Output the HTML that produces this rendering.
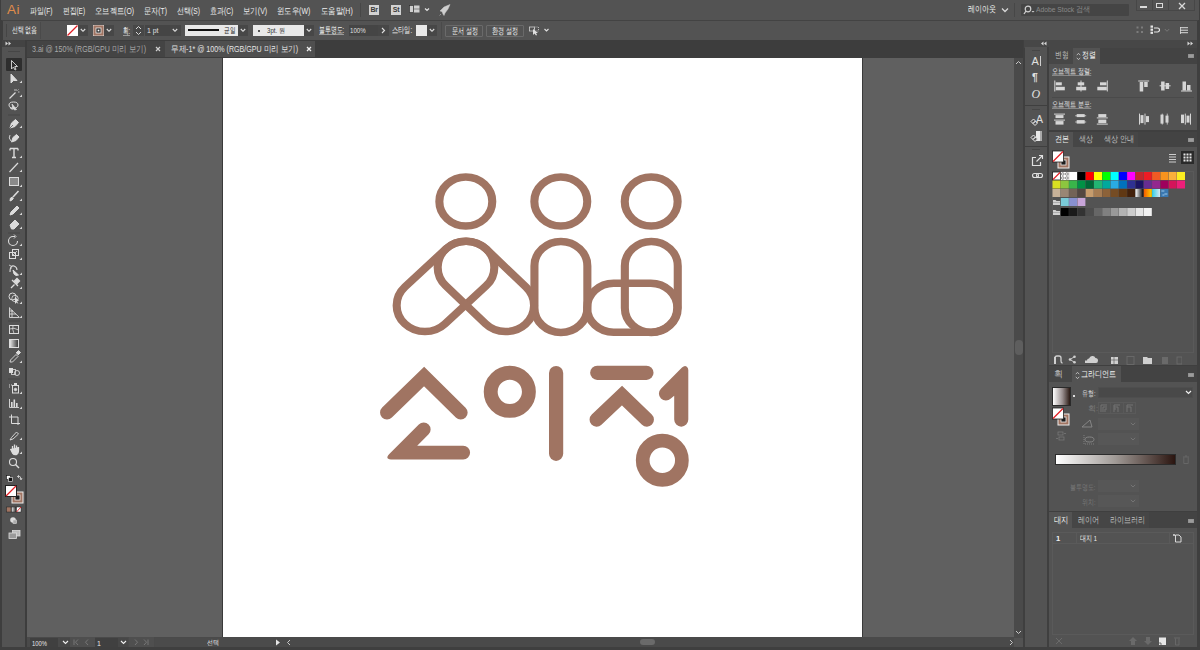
<!DOCTYPE html>
<html><head><meta charset="utf-8">
<style>
*{margin:0;padding:0;box-sizing:border-box}
html,body{width:1200px;height:650px;overflow:hidden;background:#3e3e3e;font-family:"Liberation Sans",sans-serif;color:#d6d6d6;font-size:8px}
.a{position:absolute}
.t{position:absolute;white-space:nowrap;line-height:1}
.m{top:6.5px;font-size:8.5px;color:#eeeeee}
.s{font-size:7px;color:#e0e0e0}
.tb{font-size:8.5px}
.ph{font-size:8.5px}
.ps{font-size:7.5px;color:#e4e4e4}
.dd{background:#474747}
.ib{background:#d2d2d2;color:#3a3a3a;font-size:7px;font-weight:bold;text-align:center;line-height:10px;letter-spacing:-0.3px}
.btn{border:1px solid #6a6a6a;border-radius:1px;background:#535353}
</style></head><body>
<!-- ===== MENU BAR ===== -->
<div class="a" style="left:0;top:0;width:1200px;height:650px;background:#3e3e3e"></div>
<div class="a" style="left:1px;top:0;width:1198px;height:20px;background:#535353"></div>
<div class="t" style="left:7px;top:3px;font-size:13.5px;color:#e08c4a;letter-spacing:0.6px">Ai</div>
<div class="t m" style="left:30px;--w:22.5;transform:scaleX(0.780);transform-origin:0 0">파일(F)</div>
<div class="t m" style="left:63px;--w:22;transform:scaleX(0.750);transform-origin:0 0">편집(E)</div>
<div class="t m" style="left:95px;--w:39;transform:scaleX(0.808);transform-origin:0 0">오브젝트(O)</div>
<div class="t m" style="left:144px;--w:23;transform:scaleX(0.797);transform-origin:0 0">문자(T)</div>
<div class="t m" style="left:177px;--w:23;transform:scaleX(0.784);transform-origin:0 0">선택(S)</div>
<div class="t m" style="left:210px;--w:23.3;transform:scaleX(0.782);transform-origin:0 0">효과(C)</div>
<div class="t m" style="left:243.3px;--w:24.2;transform:scaleX(0.825);transform-origin:0 0">보기(V)</div>
<div class="t m" style="left:276.7px;--w:33.3;transform:scaleX(0.818);transform-origin:0 0">윈도우(W)</div>
<div class="t m" style="left:320.8px;--w:31.7;transform:scaleX(0.817);transform-origin:0 0">도움말(H)</div>
<div class="a" style="left:360px;top:3px;width:1px;height:14px;background:#474747"></div>
<div class="a ib" style="left:369px;top:5px;width:10px;height:10px">Br</div>
<div class="a ib" style="left:391px;top:5px;width:10px;height:10px">St</div>
<svg class="a" style="left:409px;top:5px" width="22" height="10"><rect x="0.5" y="0.5" width="4" height="7" fill="#d0d0d0" stroke="#2a2a2a" stroke-width="0.6"/><rect x="5" y="0.5" width="5.5" height="3.2" fill="#d0d0d0"/><rect x="5" y="4.3" width="5.5" height="3.2" fill="#d0d0d0"/><path d="M16 3.5 L18 5.5 L20 3.5" stroke="#e0e0e0" stroke-width="1.2" fill="none"/></svg>
<svg class="a" style="left:439px;top:4px" width="12" height="12"><path d="M11 0.5 L5 3 L1 7 L3 7.5 L4 10 L5 11.5 L6 9 L9 5 Z M2 10 L0.5 11.5" fill="#cfcfcf" stroke="#cfcfcf" stroke-width="0.5"/></svg>
<div class="t m" style="left:967.8px;top:5px;--w:28;transform:scaleX(0.778);transform-origin:0 0">레이아웃</div>
<svg class="a" style="left:1001px;top:7px" width="8" height="6"><path d="M1 1.5 L4 4.5 L7 1.5" stroke="#d8d8d8" stroke-width="1.3" fill="none"/></svg>
<div class="a" style="left:1014px;top:3px;width:1px;height:14px;background:#474747"></div>
<div class="a" style="left:1021px;top:4px;width:108px;height:12px;background:#454545;border-radius:1px"></div>
<svg class="a" style="left:1023px;top:5px" width="12" height="10"><circle cx="5" cy="4" r="2.8" stroke="#d0d0d0" stroke-width="1.2" fill="none"/><path d="M3 6 L1 9" stroke="#d0d0d0" stroke-width="1.3"/><path d="M8.5 6 L10 7.5 L11.5 6Z" fill="#d0d0d0"/></svg>
<div class="t" style="left:1035.5px;top:6px;font-size:7.5px;color:#8a8a8a;--w:54.4;transform:scaleX(0.897);transform-origin:0 0">Adobe Stock 검색</div>
<div class="a" style="left:1136px;top:-1px;width:59px;height:12px;border:1px solid #474747"></div>
<div class="a" style="left:1152px;top:0px;width:1px;height:11px;background:#474747"></div>
<div class="a" style="left:1168px;top:0px;width:1px;height:11px;background:#474747"></div>
<div class="a" style="left:1140px;top:6px;width:7px;height:1.5px;background:#dadada"></div>
<div class="a" style="left:1156px;top:3px;width:7px;height:5px;border:1.3px solid #dadada"></div>
<svg class="a" style="left:1178px;top:2px" width="8" height="8"><path d="M1 1 L7 7 M7 1 L1 7" stroke="#dadada" stroke-width="1.3"/></svg>

<!-- ===== CONTROL BAR ===== -->
<div class="a" style="left:2px;top:20px;width:1196px;height:1px;background:#434343"></div>
<div class="a" style="left:3px;top:21px;width:1194px;height:19px;background:#535353"></div>
<div class="a" style="left:6px;top:24px;width:1px;height:13px;background:#454545"></div>
<div class="t m" style="left:11.5px;top:26px;--w:25.3;transform:scaleX(0.659);transform-origin:0 0">선택 없음</div>
<div class="a" style="left:40px;top:22px;width:1px;height:17px;background:#4a4a4a"></div>
<!-- fill swatch -->
<svg class="a" style="left:67px;top:25px" width="11" height="11"><rect x="0" y="0" width="11" height="11" fill="#fff"/><path d="M0.5 10.5 L10.5 0.5" stroke="#e31e24" stroke-width="1.2"/></svg>
<div class="a dd" style="left:78px;top:25px;width:10px;height:11px"></div>
<svg class="a" style="left:80px;top:28px" width="6" height="5"><path d="M0.8 1 L3 3.3 L5.2 1" stroke="#e0e0e0" stroke-width="1.1" fill="none"/></svg>
<svg class="a" style="left:93px;top:25px" width="11" height="11"><rect x="0" y="0" width="11" height="11" fill="#a07462" stroke="#e8e8e8" stroke-width="0.8"/><rect x="3" y="3" width="5" height="5" fill="#222" stroke="#eee" stroke-width="0.8"/><rect x="4.6" y="4.6" width="1.8" height="1.8" fill="#fff"/></svg>
<div class="a dd" style="left:104px;top:25px;width:10px;height:11px"></div>
<svg class="a" style="left:106px;top:28px" width="6" height="5"><path d="M0.8 1 L3 3.3 L5.2 1" stroke="#e0e0e0" stroke-width="1.1" fill="none"/></svg>
<div class="t m" style="left:123px;top:26.5px;text-decoration:underline;text-decoration-color:#999;--w:7;transform:scaleX(0.615);transform-origin:0 0">획:</div>
<div class="a dd" style="left:133px;top:25px;width:11px;height:11px"></div>
<svg class="a" style="left:135px;top:25px" width="7" height="11"><path d="M1 4 L3.5 1.5 L6 4 M1 7 L3.5 9.5 L6 7" stroke="#d8d8d8" stroke-width="1" fill="none"/></svg>
<div class="a" style="left:145px;top:25px;width:25px;height:11px;background:#454545"></div>
<div class="t s" style="left:146.7px;top:27px;--w:11.5;transform:scaleX(0.984);transform-origin:0 0">1 pt</div>
<div class="a dd" style="left:170px;top:25px;width:11px;height:11px"></div>
<svg class="a" style="left:172px;top:28px" width="6" height="5"><path d="M0.8 1 L3 3.3 L5.2 1" stroke="#e0e0e0" stroke-width="1.1" fill="none"/></svg>
<!-- stroke style -->
<div class="a" style="left:185px;top:25px;width:53px;height:11px;background:#e8e8e8"></div>
<div class="a" style="left:188px;top:29.3px;width:31px;height:2.2px;background:#111"></div>
<div class="t" style="left:223.5px;top:26.5px;font-size:7.5px;color:#222;--w:11.2;transform:scaleX(0.700);transform-origin:0 0">균일</div>
<div class="a dd" style="left:238px;top:25px;width:10px;height:11px"></div>
<svg class="a" style="left:240px;top:28px" width="6" height="5"><path d="M0.8 1 L3 3.3 L5.2 1" stroke="#e0e0e0" stroke-width="1.1" fill="none"/></svg>
<div class="a" style="left:253px;top:25px;width:51px;height:11px;background:#e8e8e8"></div>
<div class="a" style="left:258px;top:30px;width:1.6px;height:1.6px;background:#222;border-radius:1px"></div>
<div class="t" style="left:267px;top:27px;font-size:7px;color:#333;--w:18;transform:scaleX(0.873);transform-origin:0 0">3pt. 원</div>
<div class="a dd" style="left:304px;top:25px;width:10px;height:11px"></div>
<svg class="a" style="left:306px;top:28px" width="6" height="5"><path d="M0.8 1 L3 3.3 L5.2 1" stroke="#e0e0e0" stroke-width="1.1" fill="none"/></svg>
<div class="t m" style="left:318.7px;top:26px;text-decoration:underline;text-decoration-color:#999;--w:25;transform:scaleX(0.651);transform-origin:0 0">불투명도:</div>
<div class="a" style="left:349px;top:25px;width:29px;height:11px;background:#454545"></div>
<div class="t s" style="left:350px;top:27px;--w:15.7;transform:scaleX(0.877);transform-origin:0 0">100%</div>
<div class="a dd" style="left:378px;top:25px;width:11px;height:11px"></div>
<svg class="a" style="left:381px;top:27px" width="5" height="7"><path d="M1 1 L3.5 3.5 L1 6" stroke="#e0e0e0" stroke-width="1.1" fill="none"/></svg>
<div class="t m" style="left:392.3px;top:26px;--w:20.2;transform:scaleX(0.688);transform-origin:0 0">스타일:</div>
<div class="a" style="left:416px;top:25px;width:11px;height:11px;background:#e9e9e9"></div>
<div class="a dd" style="left:427px;top:25px;width:10px;height:11px"></div>
<svg class="a" style="left:429px;top:28px" width="6" height="5"><path d="M0.8 1 L3 3.3 L5.2 1" stroke="#e0e0e0" stroke-width="1.1" fill="none"/></svg>
<div class="a" style="left:441px;top:22px;width:1px;height:17px;background:#4a4a4a"></div>
<div class="a btn" style="left:445px;top:25px;width:38px;height:12px"></div>
<div class="t m" style="left:451.5px;top:27px;--w:26;transform:scaleX(0.678);transform-origin:0 0">문서 설정</div>
<div class="a btn" style="left:486px;top:25px;width:38px;height:12px"></div>
<div class="t m" style="left:492px;top:27px;--w:26;transform:scaleX(0.678);transform-origin:0 0">환경 설정</div>
<svg class="a" style="left:529px;top:25px" width="22" height="11"><rect x="0.5" y="2" width="5" height="4" fill="none" stroke="#d0d0d0" stroke-width="0.8"/><rect x="5.5" y="2" width="4" height="4" fill="none" stroke="#d0d0d0" stroke-width="0.8" stroke-dasharray="1 1"/><path d="M4 4 L4 10 L5.5 8.5 L7 10.5 L8 10 L7 8 L9 8 Z" fill="#e0e0e0"/><path d="M15.5 4 L17.5 6 L19.5 4" stroke="#e0e0e0" stroke-width="1.1" fill="none"/></svg>
<!-- right of control bar -->
<svg class="a" style="left:1136px;top:26px" width="8" height="8"><rect x="0.5" y="0.5" width="2" height="2" fill="#7c7c7c"/><rect x="5" y="0.5" width="2" height="2" fill="#7c7c7c"/><rect x="0.5" y="5" width="2" height="2" fill="#7c7c7c"/><rect x="5" y="5" width="2" height="2" fill="#7c7c7c"/></svg>
<svg class="a" style="left:1150px;top:25px" width="12" height="10"><rect x="0.5" y="0.5" width="2.5" height="2.2" fill="#e6e6e6"/><rect x="0.5" y="3.6" width="2.5" height="2.2" fill="#e6e6e6"/><rect x="0.5" y="6.7" width="2.5" height="2.2" fill="#e6e6e6"/><path d="M4 3 L7.5 3 A2 2 0 0 1 7.5 7 L4 7" fill="none" stroke="#e6e6e6" stroke-width="1.2"/></svg>
<svg class="a" style="left:1164px;top:28px" width="6" height="5"><path d="M0.8 1 L3 3.3 L5.2 1" stroke="#777" stroke-width="1" fill="none"/></svg>
<svg class="a" style="left:1180px;top:27px" width="8" height="7"><path d="M0 0.7 H8 M0 3.2 H8 M0 5.7 H8" stroke="#dcdcdc" stroke-width="1"/><path d="M0.5 0 V7" stroke="#dcdcdc" stroke-width="0.8"/></svg>

<!-- ===== TAB BAR ===== -->
<div class="a" style="left:2px;top:40px;width:1021px;height:1px;background:#3e3e3e"></div>
<div class="a" style="left:27px;top:40px;width:996px;height:18px;background:#3d3d3d"></div>
<div class="a" style="left:27px;top:41px;width:138px;height:16px;background:#444444"></div>
<div class="a" style="left:165px;top:41px;width:150px;height:16px;background:#4f4f4f"></div>
<div class="t tb" style="left:32.4px;top:45px;color:#a9a9a9;--w:114.2;transform:scaleX(0.835);transform-origin:0 0">3.ai @ 150% (RGB/GPU 미리 보기)</div>
<svg class="a" style="left:155px;top:46px" width="6" height="6"><path d="M1 1 L5 5 M5 1 L1 5" stroke="#cfcfcf" stroke-width="1.2"/></svg>
<div class="t tb" style="left:170.6px;top:45px;color:#e4e4e4;--w:127.2;transform:scaleX(0.837);transform-origin:0 0">무제-1* @ 100% (RGB/GPU 미리 보기)</div>
<svg class="a" style="left:306px;top:46px" width="6" height="6"><path d="M1 1 L5 5 M5 1 L1 5" stroke="#f0f0f0" stroke-width="1.3"/></svg>

<!-- ===== TOOLBAR ===== -->
<div class="a" style="left:2px;top:40px;width:23px;height:607px;background:#535353"></div>
<div class="a" style="left:2px;top:40px;width:23px;height:7px;background:#434343"></div>
<svg class="a" style="left:5px;top:41px" width="8" height="5"><path d="M0.5 0.5 L3 2.5 L0.5 4.5Z M3.5 0.5 L6 2.5 L3.5 4.5Z" fill="#d8d8d8"/></svg>
<div class="a" style="left:25px;top:40px;width:2px;height:607px;background:#3d3d3d"></div>
<div class="a" style="left:8px;top:50.5px;width:12px;height:1px;background:#464646"></div>
<div class="a" style="left:6px;top:58px;width:16px;height:13px;background:#2e2e2e;border-radius:1px"></div>
<svg class="a" style="left:0;top:0" width="27" height="650" fill="none" stroke="#dcdcdc" stroke-width="1">
<!-- selection -->
<path d="M11.5 60.5 L11.5 69 L13.5 67 L15 70 L16 69.5 L14.8 66.5 L17.5 66.5 Z" stroke-width="0.9"/>
<!-- direct selection -->
<path d="M11 74 L11 83 L13.5 80.5 L17 80.5 Z" fill="#dcdcdc"/>
<path d="M19.5 83.0 L22 83.0 L22 80.5 Z" fill="#d8d8d8" stroke="none"/>
<!-- magic wand -->
<path d="M9.5 98.5 L15.5 92.5" stroke-width="1.3"/><path d="M16 89 V91 M14 90 H15 M17.5 90.5 L18.5 89.5 M18 92 H19.5" stroke-width="0.8"/>
<path d="M19.5 97.0 L22 97.0 L22 94.5 Z" fill="#d8d8d8" stroke="none"/>
<!-- lasso -->
<ellipse cx="13.5" cy="105" rx="4.5" ry="3" /><path d="M10 107 Q11 110 13 109 L12 104 L16.5 109.5 L14.5 110" fill="#dcdcdc" stroke-width="0.8"/>
<path d="M8 115 H20" stroke="#474747"/>
<!-- pen -->
<path d="M10 128 L11.5 123 L15.5 119.5 L18.5 122.5 L15 126.5 Z" fill="#dcdcdc"/><path d="M10 128 L13 125" stroke="#535353" stroke-width="0.8"/>
<path d="M19.5 128.0 L22 128.0 L22 125.5 Z" fill="#d8d8d8" stroke="none"/>
<!-- curvature -->
<path d="M11.5 142 L13 137.5 L16.5 134.5 L19 137 L16 140.5 Z" fill="#dcdcdc"/><path d="M11 141 Q8 138 10 135" stroke-width="0.9"/>
<!-- type -->
<path d="M10 148.5 H18 M14 148.5 V157.5 M12 157.5 H16 M10 148.5 V150.5 M18 148.5 V150.5" stroke-width="1.4"/>
<path d="M19.5 158.0 L22 158.0 L22 155.5 Z" fill="#d8d8d8" stroke="none"/>
<!-- line -->
<path d="M9.5 172 L18 163" stroke-width="1.2"/>
<path d="M19.5 172.0 L22 172.0 L22 169.5 Z" fill="#d8d8d8" stroke="none"/>
<!-- rect -->
<rect x="9.5" y="177.5" width="9" height="8" fill="#8a8a8a" stroke="#dcdcdc"/>
<path d="M19.5 187.0 L22 187.0 L22 184.5 Z" fill="#d8d8d8" stroke="none"/>
<!-- paintbrush -->
<path d="M18.5 191 L13 197" stroke-width="1.6"/><path d="M12.5 197 Q9.5 197.5 10 201 Q12.5 200.5 13.5 198" fill="#dcdcdc"/>
<path d="M19.5 201.0 L22 201.0 L22 198.5 Z" fill="#d8d8d8" stroke="none"/>
<!-- pencil -->
<path d="M10 215 L11 212 L17 206 L19 208 L13 214 Z" fill="#dcdcdc"/>
<path d="M19.5 215.0 L22 215.0 L22 212.5 Z" fill="#d8d8d8" stroke="none"/>
<!-- eraser -->
<path d="M10 225 L15 220 L19 224 L14 229 L11.5 229 Z" fill="#dcdcdc"/>
<path d="M19.5 229.0 L22 229.0 L22 226.5 Z" fill="#d8d8d8" stroke="none"/>
<path d="M8 233 H20" stroke="#474747"/>
<!-- rotate -->
<path d="M17.5 241 A4.5 4.5 0 1 1 13 236.5 L15 236.5" stroke-width="1.1"/><path d="M14 234.5 L16 236.5 L14 238.5" stroke-width="0.9"/>
<path d="M19.5 246.0 L22 246.0 L22 243.5 Z" fill="#d8d8d8" stroke="none"/>
<!-- scale -->
<rect x="9.5" y="252.5" width="6" height="6"/><rect x="12.5" y="249.5" width="6" height="6"/><path d="M13 255 L17 251" stroke-width="0.8"/>
<path d="M19.5 260.0 L22 260.0 L22 257.5 Z" fill="#d8d8d8" stroke="none"/>
<!-- warp -->
<path d="M10 272 Q10 265 14 266 Q17 267 17 270" stroke-width="1.1"/><path d="M13 270 L18.5 275 L16 275.5 L14 274 Z" fill="#dcdcdc"/><path d="M9 265 L11 266 M10 268 L12 268" stroke-width="0.8"/>
<path d="M19.5 275.0 L22 275.0 L22 272.5 Z" fill="#d8d8d8" stroke="none"/>
<!-- width / puppet -->
<path d="M11 288 L14.5 284.5 M12 280 L18 286 M14 281.5 L17 278.5 L19.5 281 L16.5 284" fill="#dcdcdc" stroke-width="1.3"/>
<path d="M19.5 289.0 L22 289.0 L22 286.5 Z" fill="#d8d8d8" stroke="none"/>
<!-- shape builder -->
<circle cx="12.5" cy="296.5" r="3.5"/><circle cx="15" cy="298.5" r="3.2" stroke-width="0.8"/><path d="M15 297 L15 304 L16.5 302.5 L18.5 304 L17 301 L19 300.5 Z" fill="#dcdcdc" stroke="none"/>
<path d="M19.5 304.0 L22 304.0 L22 301.5 Z" fill="#d8d8d8" stroke="none"/>
<!-- perspective -->
<path d="M9.5 307.5 V317.5 H19.5 M9.5 308 L19 317 M9.5 311 H13 M9.5 314 H16 M12 310 V317" stroke-width="0.9"/>
<path d="M19.5 318.0 L22 318.0 L22 315.5 Z" fill="#d8d8d8" stroke="none"/>
<path d="M8 321 H20" stroke="#474747"/>
<!-- mesh -->
<rect x="9.5" y="325.5" width="9" height="8"/><path d="M9.5 329 Q14 327 18.5 330 M13 325.5 Q12 329.5 14 333.5" stroke-width="0.8"/>
<!-- gradient -->
<rect x="9.5" y="339.5" width="9" height="8" fill="url(#tg)" stroke="#dcdcdc"/>
<!-- eyedropper -->
<path d="M10 362 L10.5 360 L16 354.5 L18 356.5 L12.5 362 Z" stroke-width="0.9"/><path d="M16 353 L18.5 350.5 L20.5 352.5 L18 355" fill="#dcdcdc"/>
<path d="M19.5 363.0 L22 363.0 L22 360.5 Z" fill="#d8d8d8" stroke="none"/>
<!-- blend -->
<rect x="9" y="368" width="4" height="5" fill="#dcdcdc" stroke="none"/><rect x="11.5" y="369.5" width="4" height="5" fill="none" stroke-width="0.8"/><circle cx="17" cy="373" r="2.5" stroke-width="0.9"/>
<path d="M8 379 H20" stroke="#474747"/>
<!-- symbol sprayer -->
<path d="M9 385 h1 M11 385 h1 M9 387 h1" stroke-width="1"/><rect x="12.5" y="385.5" width="6" height="7.5"/><circle cx="15.5" cy="389.5" r="1.2" fill="#dcdcdc"/><rect x="14" y="383" width="3" height="2.5" fill="#dcdcdc" stroke="none"/>
<path d="M19.5 394.0 L22 394.0 L22 391.5 Z" fill="#d8d8d8" stroke="none"/>
<!-- graph -->
<path d="M9.5 399 V407.5 H19" stroke-width="0.9"/><rect x="11" y="402" width="1.6" height="5" fill="#dcdcdc" stroke="none"/><rect x="13.5" y="399.5" width="1.6" height="7.5" fill="#dcdcdc" stroke="none"/><rect x="16" y="403" width="1.6" height="4" fill="#dcdcdc" stroke="none"/>
<path d="M19.5 409.0 L22 409.0 L22 406.5 Z" fill="#d8d8d8" stroke="none"/>
<!-- artboard -->
<path d="M11.5 414.5 V423.5 H20 M9 417 H18 V425" stroke-width="1"/>
<!-- slice/knife -->
<path d="M10 440 L11.5 437.5 L16.5 432 L18.5 434 L13 439 Z" stroke-width="0.9"/>
<path d="M19.5 440.0 L22 440.0 L22 437.5 Z" fill="#d8d8d8" stroke="none"/>
<!-- hand -->
<path d="M10.5 449 L12.5 453 Q14 455 16.5 454.5 Q18.5 453.5 18.5 450 V447 M16.5 449 V445.5 M14.5 449 V444.5 M12.5 449 V446" fill="#dcdcdc" stroke-width="1.3"/>
<path d="M19.5 454.0 L22 454.0 L22 451.5 Z" fill="#d8d8d8" stroke="none"/>
<!-- zoom -->
<circle cx="13" cy="462" r="3.5" stroke-width="1.1"/><path d="M15.5 464.5 L19 468" stroke-width="1.4"/>
</svg>
<svg class="a" style="left:0;top:0" width="27" height="650">
<defs><linearGradient id="tg"><stop offset="0" stop-color="#eee"/><stop offset="1" stop-color="#333"/></linearGradient></defs>
<!-- default colors/swap -->
<rect x="6.5" y="475.5" width="4" height="4" fill="#fff" stroke="#111" stroke-width="0.6"/><rect x="8.5" y="477.5" width="4" height="4" fill="#111" stroke="#eee" stroke-width="0.6"/>
<path d="M18 476 Q21 476 21 479 M17 477 L18.5 475.5 L18.5 478 M20 478 L21 480 L22 478" stroke="#dcdcdc" stroke-width="0.8" fill="none"/>
<!-- stroke box -->
<rect x="12" y="492" width="11" height="11" fill="#a07462" stroke="#ededed" stroke-width="1"/><rect x="15" y="495" width="5" height="5" fill="#1d1d1d" stroke="#eee" stroke-width="0.8"/>
<!-- fill box -->
<rect x="5.5" y="485.5" width="11" height="11" fill="#fff" stroke="#222" stroke-width="1"/><path d="M6 496 L16 486" stroke="#e31e24" stroke-width="1.3"/>
<!-- color/gradient/none -->
<rect x="6.5" y="507" width="4.5" height="5" fill="#a07462" stroke="#222" stroke-width="0.5"/><rect x="11.5" y="507" width="4.5" height="5" fill="url(#tg)" stroke="#222" stroke-width="0.5"/><rect x="16.5" y="507" width="4.5" height="5" fill="#fff" stroke="#222" stroke-width="0.5"/><path d="M16.5 512 L21 507" stroke="#e31e24" stroke-width="0.9"/>
<!-- draw mode -->
<circle cx="13" cy="520" r="2.8" fill="#dcdcdc"/><rect x="13" y="520" width="3.5" height="3.5" fill="#aaa" stroke="#dcdcdc" stroke-width="0.6"/>
<!-- screen mode -->
<rect x="12.5" y="530.5" width="7.5" height="5.5" fill="#bbb" stroke="#dcdcdc" stroke-width="0.8"/><rect x="9" y="533" width="7.5" height="5.5" fill="#999" stroke="#dcdcdc" stroke-width="0.8"/>
</svg>
<div class="a" style="left:2px;top:647px;width:23px;height:0"></div>

<!-- ===== CANVAS ===== -->
<div class="a" style="left:27px;top:58px;width:987px;height:579px;background:#606060"></div>
<div class="a" style="left:222px;top:58px;width:641px;height:581px;background:#3a3a3a"></div>
<div class="a" style="left:223px;top:58px;width:639px;height:579px;background:#ffffff"></div>

<svg class="a" style="left:0;top:0" width="1200" height="650" viewBox="0 0 1200 650">
<g transform="translate(560 0) scale(1.08 1) translate(-560 0)" fill="none" stroke="#a07462" stroke-width="7.5">
<ellipse cx="472.78" cy="201.5" rx="24.5" ry="24.5"/>
<ellipse cx="560.74" cy="201.5" rx="24.5" ry="24.5"/>
<ellipse cx="644.44" cy="201.5" rx="24.5" ry="24.5"/>
<path d="M536.33 265.90 L536.33 307.90 A24.5 24.5 0 0 0 585.33 307.90 L585.33 265.90 A24.5 24.5 0 0 0 536.33 265.90 Z"/>
<path d="M620.04 265.90 L620.04 307.90 A24.5 24.5 0 0 0 669.04 307.90 L669.04 265.90 A24.5 24.5 0 0 0 620.04 265.90 Z"/>
<path d="M609.63 332.20 L644.07 332.20 A24.5 24.5 0 0 0 644.07 283.20 L609.63 283.20 A24.5 24.5 0 0 0 609.63 332.20 Z"/>
<path d="M454.44 248.87 L416.44 286.87 A26.2 26.2 0 0 0 453.49 323.93 L491.49 285.93 A26.2 26.2 0 0 0 454.44 248.87 Z"/>
<path d="M454.14 285.63 L490.94 323.63 A26.2 26.2 0 0 0 528.58 287.17 L491.78 249.17 A26.2 26.2 0 0 0 454.14 285.63 Z"/>
</g>
<g fill="none" stroke="#a07462" stroke-width="13.9" stroke-linecap="round" stroke-linejoin="miter">
<polyline points="387,412.6 424.1,376.5 460.7,412.6"/>
<circle cx="509.8" cy="391.8" r="19.1"/>
<line x1="556.1" y1="373.1" x2="556.1" y2="453.8" stroke-width="14.2"/>
<line x1="597.2" y1="372.85" x2="646.5" y2="372.85" stroke-width="14.1"/>
<polyline points="596.6,419.6 622,395.6 646.9,419.6" stroke-width="14.1"/>
<circle cx="662.3" cy="460.3" r="19.6" stroke-width="13.7"/>
</g>
<g fill="#a07462">
<path d="M417.2 445.7 L463.2 445.7 A6.9 6.9 0 0 1 463.2 459.5 L393 459.5 Q384 459.5 389.3 454 L418.8 424.5 A6.9 6.9 0 0 1 428.6 434.3 Z"/>
<path d="M674.2 395.8 L670.85 398.55 A7 7 0 0 1 660.95 388.65 L682 367.6 Q684.5 365.3 686.5 366.5 Q688.3 367.8 688.3 370 L688.3 419.6 A7.05 7.05 0 0 1 674.2 419.6 Z"/>
</g>
</svg>
<!-- ===== SCROLLBARS / STATUS ===== -->
<div class="a" style="left:1014px;top:58px;width:9px;height:580px;background:#4a4a4a"></div>
<svg class="a" style="left:1015px;top:60px" width="7" height="5"><path d="M1 4 L3.5 1.5 L6 4" stroke="#c8c8c8" stroke-width="1" fill="none"/></svg>
<div class="a" style="left:1015px;top:340px;width:8px;height:15px;background:#5e5e5e;border-radius:4px"></div>
<svg class="a" style="left:1015px;top:630px" width="7" height="5"><path d="M1 1 L3.5 3.5 L6 1" stroke="#c8c8c8" stroke-width="1" fill="none"/></svg>
<div class="a" style="left:27px;top:637px;width:996px;height:10px;background:#4a4a4a"></div>
<div class="a" style="left:1014px;top:638px;width:9px;height:9px;background:#535353"></div>
<div class="a" style="left:640px;top:639px;width:15px;height:6px;background:#6a6a6a;border-radius:3px"></div>
<svg class="a" style="left:1009px;top:639px" width="5" height="7"><path d="M1 1 L3.5 3.5 L1 6" stroke="#c8c8c8" stroke-width="1" fill="none"/></svg>
<div class="a" style="left:30px;top:638px;width:28px;height:9px;background:#404040"></div>
<div class="t s" style="left:32px;top:639.5px;font-size:7px;color:#e6e6e6;--w:15;transform:scaleX(0.838);transform-origin:0 0">100%</div>
<div class="a" style="left:60px;top:638px;width:10px;height:9px;background:#474747"></div>
<svg class="a" style="left:61.5px;top:640px" width="7" height="5"><path d="M1 1 L3.5 3.5 L6 1" stroke="#f0f0f0" stroke-width="1.1" fill="none"/></svg>
<div class="a" style="left:70px;top:637px;width:25px;height:10px;background:#4f4f4f"></div>
<svg class="a" style="left:73px;top:639px" width="20" height="7"><path d="M1 0.5 V6 M5 0.5 L2.5 3.2 L5 6 M15 0.5 L12.5 3.2 L15 6" stroke="#7a7a7a" stroke-width="0.9" fill="none"/></svg>
<div class="a" style="left:95px;top:638px;width:23px;height:9px;background:#404040"></div>
<div class="t s" style="left:97px;top:639.5px;font-size:7px;color:#e6e6e6">1</div>
<div class="a" style="left:118px;top:638px;width:10px;height:9px;background:#474747"></div>
<svg class="a" style="left:119.5px;top:640px" width="7" height="5"><path d="M1 1 L3.5 3.5 L6 1" stroke="#f0f0f0" stroke-width="1.1" fill="none"/></svg>
<div class="a" style="left:129px;top:637px;width:25px;height:10px;background:#4f4f4f"></div>
<svg class="a" style="left:133px;top:639px" width="20" height="7"><path d="M2 0.5 L4.5 3.2 L2 6 M11 0.5 L13.5 3.2 L11 6 M15 0.5 V6" stroke="#7a7a7a" stroke-width="0.9" fill="none"/></svg>
<div class="a" style="left:155px;top:638px;width:118px;height:9px;background:#4b4b4b"></div>
<div class="t s" style="left:207.3px;top:639px;font-size:7px;color:#e6e6e6;--w:12;transform:scaleX(0.857);transform-origin:0 0">선택</div>
<svg class="a" style="left:275px;top:639px" width="6" height="7"><path d="M1 0.5 L5 3.5 L1 6.5Z" fill="#e6e6e6"/></svg>
<svg class="a" style="left:286px;top:639px" width="5" height="7"><path d="M4 1 L1.5 3.5 L4 6" stroke="#c8c8c8" stroke-width="1" fill="none"/></svg>

<!-- ===== RIGHT DOCK ===== -->
<div class="a" style="left:1023px;top:40px;width:177px;height:610px;background:#3f3f3f"></div>
<div class="a" style="left:1024px;top:40px;width:174px;height:7.5px;background:#474747"></div>
<svg class="a" style="left:1039px;top:41px" width="8" height="5"><path d="M7.5 0.5 L5 2.5 L7.5 4.5Z M4.5 0.5 L2 2.5 L4.5 4.5Z" fill="#d8d8d8"/></svg>
<svg class="a" style="left:1187px;top:41px" width="8" height="5"><path d="M0.5 0.5 L3 2.5 L0.5 4.5Z M3.5 0.5 L6 2.5 L3.5 4.5Z" fill="#d8d8d8"/></svg>
<!-- icon strip -->
<div class="a" style="left:1025px;top:47px;width:22px;height:58px;background:#535353"></div>
<div class="a" style="left:1025px;top:106px;width:22px;height:39.5px;background:#535353"></div>
<div class="a" style="left:1025px;top:146.5px;width:22px;height:500.5px;background:#535353"></div>
<div class="a" style="left:1032px;top:49.5px;width:8px;height:1px;background:#464646"></div>
<div class="a" style="left:1032px;top:108.5px;width:8px;height:1px;background:#464646"></div>
<div class="a" style="left:1032px;top:148.5px;width:8px;height:1px;background:#464646"></div>
<div class="t" style="left:1031.5px;top:56px;font-size:11px;color:#e0e0e0">A</div>
<div class="a" style="left:1040px;top:56px;width:1px;height:10px;background:#cfcfcf"></div>
<div class="t" style="left:1032px;top:72px;font-size:10.5px;color:#e0e0e0;font-weight:bold">¶</div>
<div class="t" style="left:1031.5px;top:88px;font-size:12px;color:#e0e0e0;font-family:'Liberation Serif',serif;font-style:italic">O</div>
<div class="t" style="left:1036px;top:113.5px;font-size:10.5px;color:#e0e0e0">A</div>
<svg class="a" style="left:1030px;top:118px" width="8" height="8"><path d="M1 3.5 L3.5 1 L5.5 3 L3 5.5 Z M3 5.5 L5.5 3 L7.5 5 L5 7.5 Z" fill="none" stroke="#e6e6e6" stroke-width="1"/></svg>
<div class="a" style="left:1036px;top:131px;width:6px;height:10px;background:linear-gradient(90deg,#e6e6e6 60%,#aaa 60%)"></div>
<svg class="a" style="left:1030px;top:134px" width="8" height="8"><path d="M1 3.5 L3.5 1 L5.5 3 L3 5.5 Z M3 5.5 L5.5 3 L7.5 5 L5 7.5 Z" fill="#535353" stroke="#e6e6e6" stroke-width="1"/></svg>
<svg class="a" style="left:1031px;top:152.5px" width="14" height="30"><path d="M5 4.5 H1.5 V12.5 H9.5 V9" stroke="#e0e0e0" stroke-width="1.2" fill="none"/><path d="M5.5 8.5 L11 3 M8 2.5 H11.5 V6" stroke="#e0e0e0" stroke-width="1.1" fill="none"/><rect x="1.5" y="20.5" width="6" height="4" rx="2" stroke="#e0e0e0" stroke-width="1.1" fill="none"/><rect x="5.5" y="20.5" width="6" height="4" rx="2" stroke="#e0e0e0" stroke-width="1.1" fill="none"/></svg>
<div class="a" style="left:1047px;top:47px;width:2px;height:600px;background:#3f3f3f"></div>

<!-- panel 1: align -->
<div class="a" style="left:1049px;top:48px;width:148px;height:82px;background:#535353"></div>
<div class="a" style="left:1049px;top:48px;width:148px;height:16px;background:#434343"></div>
<div class="a" style="left:1049px;top:48px;width:24px;height:16px;background:#474747"></div>
<div class="a" style="left:1073px;top:48px;width:27px;height:16px;background:#535353"></div>
<div class="t ph" style="left:1055.1px;top:51px;color:#bdbdbd;--w:13.5;transform:scaleX(0.750);transform-origin:0 0">변형</div>
<svg class="a" style="left:1076px;top:51.5px" width="5" height="9"><path d="M0.8 3.2 L2.5 1.3 L4.2 3.2 M0.8 5.8 L2.5 7.7 L4.2 5.8" stroke="#cfcfcf" stroke-width="0.8" fill="none"/></svg>
<div class="t ph" style="left:1082.4px;top:51px;color:#f0f0f0;--w:13.9;transform:scaleX(0.772);transform-origin:0 0">정렬</div>
<div class="a" style="left:1187.5px;top:53.5px;width:6px;height:4.5px;background:#9c9c9c;box-shadow:inset 0 0 0 0.5px #8a8a8a"></div>
<div class="t ps" style="left:1052px;top:67.5px;text-decoration:underline;text-decoration-color:#888;--w:39.3;transform:scaleX(0.753);transform-origin:0 0">오브젝트 정렬:</div>
<svg class="a" style="left:1049px;top:78px" width="148" height="50" fill="#d6d6d6" stroke="none"><g transform="translate(5.3 2.5)"><rect x="0" y="0" width="1" height="11"/><rect x="1.5" y="1.8" width="6" height="3"/><rect x="1.5" y="6.3" width="9" height="3.5"/></g><g transform="translate(26.7 2.5)"><rect x="4.8" y="0" width="1" height="11"/><rect x="2" y="1.8" width="6.5" height="3"/><rect x="0.5" y="6.3" width="10" height="3.5"/></g><g transform="translate(48 2.5)"><rect x="9.8" y="0" width="1" height="11"/><rect x="3" y="1.8" width="6.5" height="3"/><rect x="0.3" y="6.3" width="9.5" height="3.5"/></g><g transform="translate(89.2 2.5)"><rect x="0" y="0" width="11" height="1"/><rect x="1.5" y="1.5" width="3.5" height="9.5"/><rect x="6" y="1.5" width="3.5" height="5"/></g><g transform="translate(110.6 2.5)"><rect x="0" y="4.8" width="11" height="1"/><rect x="1.5" y="1" width="3.5" height="9"/><rect x="6" y="2.5" width="3.5" height="6"/></g><g transform="translate(132 2.5)"><rect x="0" y="10" width="11" height="1"/><rect x="1.5" y="1" width="3.5" height="9"/><rect x="6" y="4.5" width="3.5" height="5.5"/></g><g transform="translate(5 35.6)"><rect x="0" y="0" width="11" height="1"/><rect x="1.5" y="1.5" width="8" height="3"/><rect x="0" y="6" width="11" height="1"/><rect x="1.5" y="7.5" width="8" height="3.5"/></g><g transform="translate(26.2 35.6)"><rect x="1.5" y="0.5" width="8" height="3"/><rect x="0" y="1.8" width="11" height="0.8"/><rect x="1.5" y="6.5" width="8" height="3.5"/><rect x="0" y="8" width="11" height="0.8"/></g><g transform="translate(47.8 35.6)"><rect x="1.5" y="0.5" width="8" height="3"/><rect x="0" y="3.8" width="11" height="1"/><rect x="1.5" y="6" width="8" height="3.5"/><rect x="0" y="10" width="11" height="1"/></g><g transform="translate(90 35.6)"><rect x="0" y="0" width="1" height="11"/><rect x="1.5" y="1.5" width="3" height="8"/><rect x="5.5" y="0" width="1" height="11"/><rect x="7" y="2.5" width="3" height="6"/></g><g transform="translate(111 35.6)"><rect x="0.5" y="1" width="3" height="9"/><rect x="1.8" y="0" width="0.8" height="11"/><rect x="5.5" y="2" width="3" height="7"/><rect x="6.8" y="0" width="0.8" height="11"/></g><g transform="translate(132 35.6)"><rect x="0" y="1" width="3" height="8.5"/><rect x="3.8" y="0" width="1" height="11"/><rect x="5.5" y="2" width="3" height="7"/><rect x="9" y="0" width="1" height="11"/></g></svg>
<div class="a" style="left:1052px;top:97px;width:142px;height:1px;background:#4a4a4a"></div>
<div class="t ps" style="left:1052px;top:100.5px;text-decoration:underline;text-decoration-color:#888;--w:39.3;transform:scaleX(0.753);transform-origin:0 0">오브젝트 분포:</div>

<!-- panel 2: swatches -->
<div class="a" style="left:1049px;top:132px;width:148px;height:233px;background:#535353"></div>
<div class="a" style="left:1049px;top:132px;width:148px;height:15px;background:#434343"></div>
<div class="a" style="left:1049px;top:132px;width:24px;height:15px;background:#535353"></div>
<div class="a" style="left:1073px;top:132px;width:25px;height:15px;background:#464646"></div>
<div class="a" style="left:1098px;top:132px;width:40px;height:15px;background:#464646"></div>
<div class="t ph" style="left:1054.8px;top:135px;color:#f0f0f0;--w:14.2;transform:scaleX(0.789);transform-origin:0 0">견본</div>
<div class="t ph" style="left:1078.7px;top:135px;color:#bdbdbd;--w:13.9;transform:scaleX(0.772);transform-origin:0 0">색상</div>
<div class="t ph" style="left:1103.7px;top:135px;color:#bdbdbd;--w:30.3;transform:scaleX(0.790);transform-origin:0 0">색상 안내</div>
<div class="a" style="left:1187.5px;top:137.5px;width:6px;height:4.5px;background:#9c9c9c;box-shadow:inset 0 0 0 0.5px #8a8a8a"></div>
<svg class="a" style="left:1051px;top:150px" width="20" height="20"><rect x="7" y="7" width="11" height="11" fill="#a07462" stroke="#eee" stroke-width="1"/><rect x="10" y="10" width="5" height="5" fill="#1d1d1d" stroke="#eee" stroke-width="0.8"/><rect x="1.5" y="1" width="11" height="11" fill="#fff" stroke="#222" stroke-width="0.8"/><path d="M2 11.5 L12 1.5" stroke="#e31e24" stroke-width="1.3"/></svg>
<svg class="a" style="left:1166px;top:151px" width="30" height="13"><path d="M3 3.5 H10 M3 6 H10 M3 8.5 H10 M3 11 H10" stroke="#dcdcdc" stroke-width="0.9"/><rect x="15" y="0" width="13" height="13" fill="#2a2a2a"/><g fill="#e6e6e6"><rect x="17.5" y="2.5" width="2" height="2"/><rect x="20.5" y="2.5" width="2" height="2"/><rect x="23.5" y="2.5" width="2" height="2"/><rect x="17.5" y="5.5" width="2" height="2"/><rect x="20.5" y="5.5" width="2" height="2"/><rect x="23.5" y="5.5" width="2" height="2"/><rect x="17.5" y="8.5" width="2" height="2"/><rect x="20.5" y="8.5" width="2" height="2"/><rect x="23.5" y="8.5" width="2" height="2"/></g></svg>
<div class="a" style="left:1052px;top:171px;width:142px;height:182px;border:1px solid #5a5a5a"></div>
<svg class="a" style="left:0;top:0" width="1200" height="650">
<defs><linearGradient id="sg1"><stop offset="0" stop-color="#fff"/><stop offset="1" stop-color="#000"/></linearGradient>
<linearGradient id="sg2"><stop offset="0" stop-color="#f15a00"/><stop offset="1" stop-color="#ffd000"/></linearGradient>
<linearGradient id="sg3"><stop offset="0" stop-color="#30d0e8"/><stop offset="1" stop-color="#d8e8f0"/></linearGradient></defs>
<rect x="1052.5" y="172" width="8.0" height="8.0" fill="#fff" stroke="#1a1a1a" stroke-width="0.8"/><path d="M1053.0 179.5 L1060.0 172.5" stroke="#e31e24" stroke-width="1.1"/>
<rect x="1060.8" y="172" width="8.0" height="8.0" fill="#fff"/><g fill="none" stroke="#222" stroke-width="0.5"><circle cx="1062.8" cy="174" r="1.3"/><circle cx="1066.8" cy="174" r="1.3"/><circle cx="1062.8" cy="178" r="1.3"/><circle cx="1066.8" cy="178" r="1.3"/></g>
<rect x="1069.1" y="172" width="8.0" height="8.0" fill="#ffffff"/>
<rect x="1077.4" y="172" width="8.0" height="8.0" fill="#000000"/>
<rect x="1085.7" y="172" width="8.0" height="8.0" fill="#ff0000"/>
<rect x="1094.0" y="172" width="8.0" height="8.0" fill="#ffff00"/>
<rect x="1102.3" y="172" width="8.0" height="8.0" fill="#00ff00"/>
<rect x="1110.6" y="172" width="8.0" height="8.0" fill="#00ffff"/>
<rect x="1118.9" y="172" width="8.0" height="8.0" fill="#0000ff"/>
<rect x="1127.2" y="172" width="8.0" height="8.0" fill="#ff00ff"/>
<rect x="1135.5" y="172" width="8.0" height="8.0" fill="#c1272d"/>
<rect x="1143.8" y="172" width="8.0" height="8.0" fill="#ed1c24"/>
<rect x="1152.1" y="172" width="8.0" height="8.0" fill="#f15a24"/>
<rect x="1160.4" y="172" width="8.0" height="8.0" fill="#f7931e"/>
<rect x="1168.7" y="172" width="8.0" height="8.0" fill="#fbb03b"/>
<rect x="1177.0" y="172" width="8.0" height="8.0" fill="#fcee21"/>
<rect x="1052.5" y="180.5" width="8.0" height="8.0" fill="#d9e021"/>
<rect x="1060.8" y="180.5" width="8.0" height="8.0" fill="#8cc63f"/>
<rect x="1069.1" y="180.5" width="8.0" height="8.0" fill="#39b54a"/>
<rect x="1077.4" y="180.5" width="8.0" height="8.0" fill="#009245"/>
<rect x="1085.7" y="180.5" width="8.0" height="8.0" fill="#006837"/>
<rect x="1094.0" y="180.5" width="8.0" height="8.0" fill="#22b573"/>
<rect x="1102.3" y="180.5" width="8.0" height="8.0" fill="#00a99d"/>
<rect x="1110.6" y="180.5" width="8.0" height="8.0" fill="#29abe2"/>
<rect x="1118.9" y="180.5" width="8.0" height="8.0" fill="#0071bc"/>
<rect x="1127.2" y="180.5" width="8.0" height="8.0" fill="#2e3192"/>
<rect x="1135.5" y="180.5" width="8.0" height="8.0" fill="#1b1464"/>
<rect x="1143.8" y="180.5" width="8.0" height="8.0" fill="#662d91"/>
<rect x="1152.1" y="180.5" width="8.0" height="8.0" fill="#93278f"/>
<rect x="1160.4" y="180.5" width="8.0" height="8.0" fill="#9e005d"/>
<rect x="1168.7" y="180.5" width="8.0" height="8.0" fill="#d4145a"/>
<rect x="1177.0" y="180.5" width="8.0" height="8.0" fill="#ed1e79"/>
<rect x="1052.5" y="189" width="8.0" height="8.0" fill="#c7b299"/>
<rect x="1060.8" y="189" width="8.0" height="8.0" fill="#998675"/>
<rect x="1069.1" y="189" width="8.0" height="8.0" fill="#736357"/>
<rect x="1077.4" y="189" width="8.0" height="8.0" fill="#534741"/>
<rect x="1085.7" y="189" width="8.0" height="8.0" fill="#c69c6d"/>
<rect x="1094.0" y="189" width="8.0" height="8.0" fill="#a67c52"/>
<rect x="1102.3" y="189" width="8.0" height="8.0" fill="#8c6239"/>
<rect x="1110.6" y="189" width="8.0" height="8.0" fill="#754c24"/>
<rect x="1118.9" y="189" width="8.0" height="8.0" fill="#603813"/>
<rect x="1127.2" y="189" width="8.0" height="8.0" fill="#42210b"/>
<rect x="1135.5" y="189" width="8.0" height="8.0" fill="url(#sg1)"/>
<rect x="1143.8" y="189" width="8.0" height="8.0" fill="url(#sg2)"/>
<rect x="1152.1" y="189" width="8.0" height="8.0" fill="url(#sg3)"/>
<rect x="1160.4" y="189" width="8.0" height="8.0" fill="#3a78b0"/><path d="M1161.4 191 h3 M1164.4 194 h3 M1162.4 195 h2" stroke="#9cc8e8" stroke-width="1"/>
<path d="M1053.0 200 H1055.5 L1056.5 201 H1060.0 V205 H1053.0 Z" fill="#d0d0d0"/><path d="M1053.0 202.5 H1060.0" stroke="#888" stroke-width="0.5"/>
<rect x="1060.8" y="198" width="8.0" height="8.0" fill="#7acad8"/>
<rect x="1069.1" y="198" width="8.0" height="8.0" fill="#8890d0"/>
<rect x="1077.4" y="198" width="8.0" height="8.0" fill="#c7a4d8"/>
<path d="M1053.0 210 H1055.5 L1056.5 211 H1060.0 V215 H1053.0 Z" fill="#d0d0d0"/><path d="M1053.0 212.5 H1060.0" stroke="#888" stroke-width="0.5"/>
<rect x="1060.8" y="208" width="8.0" height="8.0" fill="#000000"/>
<rect x="1069.1" y="208" width="8.0" height="8.0" fill="#1a1a1a"/>
<rect x="1077.4" y="208" width="8.0" height="8.0" fill="#333333"/>
<rect x="1085.7" y="208" width="8.0" height="8.0" fill="#4d4d4d"/>
<rect x="1094.0" y="208" width="8.0" height="8.0" fill="#666666"/>
<rect x="1102.3" y="208" width="8.0" height="8.0" fill="#808080"/>
<rect x="1110.6" y="208" width="8.0" height="8.0" fill="#999999"/>
<rect x="1118.9" y="208" width="8.0" height="8.0" fill="#b3b3b3"/>
<rect x="1127.2" y="208" width="8.0" height="8.0" fill="#cccccc"/>
<rect x="1135.5" y="208" width="8.0" height="8.0" fill="#e6e6e6"/>
<rect x="1143.8" y="208" width="8.0" height="8.0" fill="#f2f2f2"/>
</svg>
<svg class="a" style="left:1052px;top:352px" width="130" height="14" fill="#d0d0d0">
<path d="M3 12 V6 Q3 4 5 4 H7 Q9 4 9 6 V9 Q9 11 10.5 11" stroke="#d0d0d0" stroke-width="1.3" fill="none"/><rect x="2" y="5" width="2" height="7"/>
<path d="M18 7.5 L22 5 M18 7.5 L22 10" stroke="#d0d0d0" stroke-width="0.9"/><circle cx="18" cy="7.5" r="1.3"/><circle cx="22.5" cy="4.8" r="1.3"/><circle cx="22.5" cy="10.2" r="1.3"/>
<path d="M33 11 H44 Q46 11 46 8.5 Q46 6 43.5 6 Q42.5 3.5 40 4 Q38 4 37 6.5 Q35 6.5 35 8.5 H33" />
<rect x="59" y="5" width="7" height="7"/><path d="M59 8 H66 M62 5 V12" stroke="#535353" stroke-width="0.6"/>
<rect x="75" y="4.5" width="7" height="8" fill="none" stroke="#6a6a6a" stroke-width="0.9"/>
<path d="M91 5 H95 L96 6 H100 V12 H91 Z"/>
<rect x="110" y="5" width="6" height="7" fill="#6a6a6a"/>
<rect x="125" y="5" width="5" height="7" fill="none" stroke="#6a6a6a" stroke-width="0.9"/>
</svg>

<!-- panel 3: gradient -->
<div class="a" style="left:1049px;top:366px;width:148px;height:145px;background:#535353"></div>
<div class="a" style="left:1049px;top:366px;width:148px;height:16px;background:#434343"></div>
<div class="a" style="left:1049px;top:366px;width:23px;height:16px;background:#464646"></div>
<div class="a" style="left:1072px;top:366px;width:49px;height:16px;background:#535353"></div>
<div class="t ph" style="left:1054px;top:370px;color:#bdbdbd">획</div>
<svg class="a" style="left:1075px;top:370.5px" width="5" height="9"><path d="M0.8 3.2 L2.5 1.3 L4.2 3.2 M0.8 5.8 L2.5 7.7 L4.2 5.8" stroke="#cfcfcf" stroke-width="0.8" fill="none"/></svg>
<div class="t ph" style="left:1081.4px;top:370px;color:#f0f0f0;--w:35.4;transform:scaleX(0.787);transform-origin:0 0">그라디언트</div>
<div class="a" style="left:1187.5px;top:372.5px;width:6px;height:4.5px;background:#9c9c9c;box-shadow:inset 0 0 0 0.5px #8a8a8a"></div>
<div class="a" style="left:1052px;top:386.5px;width:19px;height:19px;background:linear-gradient(90deg,#fff,#9a9090 55%,#2a1a14);border:1px solid #2a2a2a"></div>
<div class="a" style="left:1073px;top:395px;width:2px;height:1.5px;background:#ddd"></div>
<div class="t ps" style="left:1081.9px;top:389.5px;color:#d6d6d6;--w:13.5;transform:scaleX(0.746);transform-origin:0 0">유형:</div>
<div class="a" style="left:1098px;top:387px;width:95px;height:11px;background:#494949;border:1px solid #4e4e4e"></div>
<svg class="a" style="left:1185px;top:390px" width="7" height="5"><path d="M1 1 L3.5 3.5 L6 1" stroke="#f0f0f0" stroke-width="1.2" fill="none"/></svg>
<svg class="a" style="left:1051px;top:407px" width="20" height="20"><rect x="7" y="7" width="11" height="11" fill="#a07462" stroke="#eee" stroke-width="1"/><rect x="10" y="10" width="5" height="5" fill="#1d1d1d" stroke="#eee" stroke-width="0.8"/><rect x="1.5" y="1" width="11" height="11" fill="#fff" stroke="#222" stroke-width="0.8"/><path d="M2 11.5 L12 1.5" stroke="#e31e24" stroke-width="1.3"/></svg>
<div class="t ps" style="left:1088px;top:404.5px;color:#7a7a7a">획:</div>
<div class="a" style="left:1098px;top:402px;width:38px;height:12px;border:1px solid #5a5a5a"></div>
<svg class="a" style="left:1098px;top:402px" width="40" height="12" fill="none" stroke="#777" stroke-width="0.9"><path d="M3 10 V3 H9 M5 10 V5 H9 M7 10 V7 H9"/><path d="M16 10 V3 H22 M16 5 H20 V10 M16 7 H18"/><path d="M29 10 V3 H35 M29 5 H33 V10"/><path d="M12.5 1 V11 M25.5 1 V11" stroke="#5a5a5a"/></svg>
<svg class="a" style="left:1081px;top:418px" width="12" height="10"><path d="M1 9 H11 L9 2 Z" fill="none" stroke="#8a8a8a" stroke-width="0.9"/></svg>
<div class="a" style="left:1098px;top:418px;width:41px;height:12px;background:#575757"></div>
<svg class="a" style="left:1130px;top:422px" width="6" height="4"><path d="M0.8 0.8 L3 3 L5.2 0.8" stroke="#777" stroke-width="0.9" fill="none"/></svg>
<svg class="a" style="left:1055px;top:431px" width="12" height="10"><rect x="3" y="1" width="5" height="3" fill="none" stroke="#777" stroke-width="0.8"/><rect x="4" y="6" width="5" height="3" fill="none" stroke="#777" stroke-width="0.8"/><path d="M9 2.5 H11 M1 7.5 H3" stroke="#777" stroke-width="0.8"/></svg>
<svg class="a" style="left:1083px;top:433px" width="12" height="13"><ellipse cx="6.5" cy="6.5" rx="4.5" ry="2.5" fill="none" stroke="#8a8a8a" stroke-width="0.9"/><path d="M1 2 V11 H11" stroke="#8a8a8a" stroke-width="0.8" fill="none" stroke-dasharray="1 1"/></svg>
<div class="a" style="left:1098px;top:433px;width:41px;height:12px;background:#575757"></div>
<svg class="a" style="left:1130px;top:437px" width="6" height="4"><path d="M0.8 0.8 L3 3 L5.2 0.8" stroke="#777" stroke-width="0.9" fill="none"/></svg>
<div class="a" style="left:1055px;top:453.5px;width:121px;height:11px;background:linear-gradient(90deg,#fff,#a09a96 50%,#2b1510);border:1px solid #2c2c2c"></div>
<svg class="a" style="left:1182px;top:455px" width="8" height="9"><path d="M1 2 H7 M3 1 H5 M1.8 2.5 V8.5 H6.2 V2.5" fill="none" stroke="#6a6a6a" stroke-width="0.9"/></svg>
<div class="t ps" style="left:1070px;top:483.5px;color:#777;--w:25.4;transform:scaleX(0.745);transform-origin:0 0">불투명도:</div>
<div class="a" style="left:1098px;top:480px;width:41px;height:12px;background:#575757"></div>
<svg class="a" style="left:1130px;top:484px" width="6" height="4"><path d="M0.8 0.8 L3 3 L5.2 0.8" stroke="#777" stroke-width="0.9" fill="none"/></svg>
<div class="t ps" style="left:1081.9px;top:498.5px;color:#777;--w:13.5;transform:scaleX(0.746);transform-origin:0 0">위치:</div>
<div class="a" style="left:1098px;top:495px;width:41px;height:12px;background:#575757"></div>
<svg class="a" style="left:1130px;top:499px" width="6" height="4"><path d="M0.8 0.8 L3 3 L5.2 0.8" stroke="#777" stroke-width="0.9" fill="none"/></svg>

<!-- panel 4: artboards -->
<div class="a" style="left:1049px;top:512px;width:148px;height:135px;background:#535353"></div>
<div class="a" style="left:1049px;top:512px;width:148px;height:16px;background:#434343"></div>
<div class="a" style="left:1049px;top:512px;width:23px;height:16px;background:#535353"></div>
<div class="a" style="left:1072px;top:512px;width:32px;height:16px;background:#464646"></div>
<div class="a" style="left:1104px;top:512px;width:45px;height:16px;background:#464646"></div>
<div class="t ph" style="left:1054.3px;top:516px;color:#f0f0f0;--w:14.6;transform:scaleX(0.811);transform-origin:0 0">대지</div>
<div class="t ph" style="left:1078.1px;top:516px;color:#bdbdbd;--w:21.5;transform:scaleX(0.796);transform-origin:0 0">레이어</div>
<div class="t ph" style="left:1109.7px;top:516px;color:#bdbdbd;--w:35.3;transform:scaleX(0.784);transform-origin:0 0">라이브러리</div>
<div class="a" style="left:1187.5px;top:518.5px;width:6px;height:4.5px;background:#9c9c9c;box-shadow:inset 0 0 0 0.5px #8a8a8a"></div>
<div class="a" style="left:1052px;top:532px;width:142px;height:103px;border:1px solid #5a5a5a"></div>
<div class="a" style="left:1052px;top:543px;width:142px;height:1px;background:#5a5a5a"></div>
<div class="a" style="left:1076px;top:532px;width:1px;height:11px;background:#5a5a5a"></div>
<div class="a" style="left:1169px;top:532px;width:1px;height:11px;background:#5a5a5a"></div>
<div class="t ps" style="left:1056px;top:534.5px;color:#f0f0f0;font-weight:bold">1</div>
<div class="t ps" style="left:1079.7px;top:534.5px;color:#f0f0f0;--w:16.9;transform:scaleX(0.759);transform-origin:0 0">대지 1</div>
<svg class="a" style="left:1173px;top:533px" width="10" height="10"><path d="M2.5 2 H6 L8 4 V9 H2.5 Z M1 1 V3 M0 2 H2" fill="none" stroke="#e6e6e6" stroke-width="0.9"/></svg>
<svg class="a" style="left:1052px;top:636px" width="142" height="11">
<path d="M4 2 L10 8 M10 2 L4 8" stroke="#6a6a6a" stroke-width="1"/>
<path d="M79 9 V5 H77 L81 1 L85 5 H83 V9 Z" fill="#6a6a6a"/>
<path d="M94 1 V5 H92 L96 9 L100 5 H98 V1 Z" fill="#6a6a6a"/>
<rect x="107" y="1.5" width="7" height="7.5" fill="#e6e6e6"/><path d="M107 7 H109 V9" stroke="#555" stroke-width="0.8" fill="none"/>
<path d="M122 2 H128 M123.5 2.5 V9 H127 V2.5" fill="none" stroke="#6a6a6a" stroke-width="0.9"/>
</svg>
<div class="a" style="left:1197px;top:40px;width:3px;height:610px;background:#3f3f3f"></div>
<div class="a" style="left:0;top:647px;width:1200px;height:3px;background:#3f3f3f"></div>

</body></html>
